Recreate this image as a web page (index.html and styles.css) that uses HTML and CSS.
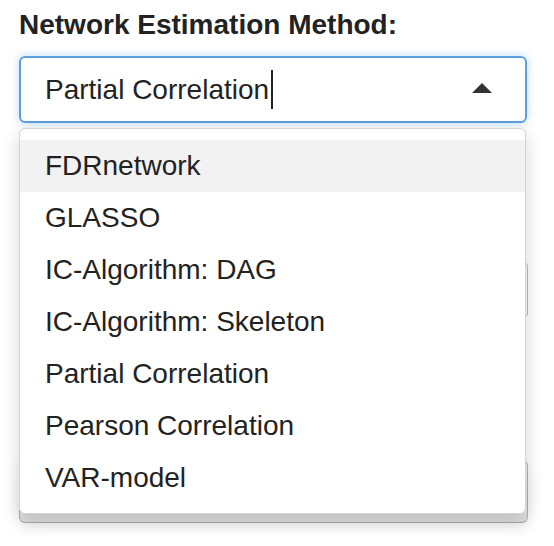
FILE: index.html
```html
<!DOCTYPE html>
<html>
<head>
<meta charset="utf-8">
<link rel="stylesheet" href="styles.css">
</head>
<body>
<div class="form">
  <label class="label">Network Estimation Method:</label>
  <div class="select-wrap">
    <div class="select">
      <span class="value">Partial Correlation</span><span class="cursor"></span>
      <span class="caret"></span>
    </div>
    <ul class="menu">
      <li class="option active">FDRnetwork</li>
      <li class="option">GLASSO</li>
      <li class="option">IC-Algorithm: DAG</li>
      <li class="option">IC-Algorithm: Skeleton</li>
      <li class="option">Partial Correlation</li>
      <li class="option">Pearson Correlation</li>
      <li class="option">VAR-model</li>
    </ul>
  </div>
  <div class="under under-one"></div>
  <div class="under under-two"></div>
</div>
</body>
</html>
```

FILE: styles.css
```css
html, body {
  margin: 0;
  padding: 0;
  background: #fff;
}
body {
  font-family: "Liberation Sans", Arial, Helvetica, sans-serif;
  color: #333;
  width: 554px;
  height: 546px;
  overflow: hidden;
}
.form {
  padding: 10px 0 0 19px;
  width: 509px;
}
.label {
  display: block;
  font-size: 28px;
  line-height: 30px;
  font-weight: bold;
  color: #222;
  margin: 0 0 16px 0;
}
.select-wrap {
  position: relative;
}
.select {
  box-sizing: border-box;
  height: 67px;
  width: 508px;
  border: 2px solid #5d9ee0;
  border-radius: 6px;
  box-shadow: 0 0 10px rgba(102, 175, 233, 0.45);
  display: flex;
  align-items: center;
  padding: 0 33px 0 24px;
  font-size: 28px;
  color: #222;
}
.cursor {
  display: inline-block;
  width: 2px;
  height: 39px;
  background: #222;
  margin-left: 2px;
}
.caret {
  margin-left: auto;
  width: 0;
  height: 0;
  border-left: 10px solid transparent;
  border-right: 10px solid transparent;
  border-bottom: 10px solid #333;
  margin-bottom: 4px;
}
.menu {
  position: absolute;
  z-index: 5;
  left: 0;
  top: calc(100% + 5px);
  box-sizing: border-box;
  width: 507px;
  margin: 0;
  padding: 11px 0 9px 0;
  list-style: none;
  background: #fff;
  border: 1px solid #d4d4d4;
  border-radius: 6px;
  box-shadow: 0 6px 18px rgba(0, 0, 0, 0.16);
}
.option {
  height: 52px;
  line-height: 52px;
  padding-left: 25px;
  font-size: 28px;
  color: #222;
}
.option.active {
  background: #f2f2f2;
}
.under {
  box-sizing: border-box;
  width: 509px;
  border: 1px solid #b8b8b8;
  border-radius: 6px;
  background: #fff;
}
.under-one {
  margin-top: 138px;
  height: 58px;
}
.under-two {
  margin-top: 141px;
  height: 63px;
  background: linear-gradient(#f6f6f6, #dcdcdc);
  border-color: #c4c4c4 #b0b0b0 #a8a8a8 #b0b0b0;
  box-shadow: 0 4px 14px rgba(0, 0, 0, 0.08);
}
```
